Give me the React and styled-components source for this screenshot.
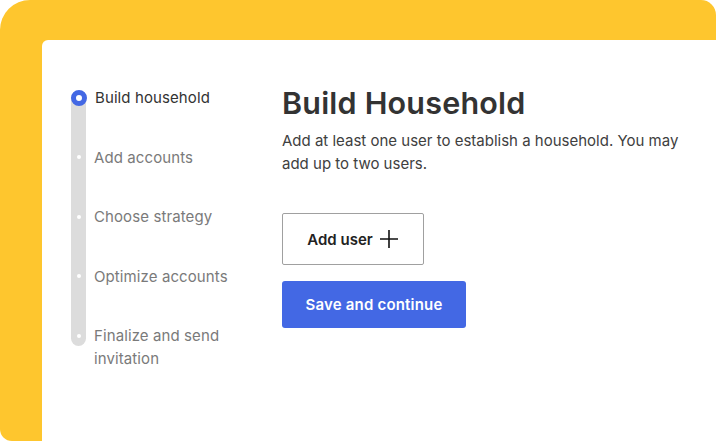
import styled, { createGlobalStyle } from "styled-components";

const GlobalStyle = createGlobalStyle`
  html, body {
    margin: 0;
    padding: 0;
    background: #ffffff;
  }
  body {
    font-family: Inter, "Liberation Sans", sans-serif;
    -webkit-font-smoothing: antialiased;
  }
`;

const Frame = styled.div`
  width: 716px;
  height: 441px;
  box-sizing: border-box;
  padding: 40px 0 0 42px;
  background: #fec62e;
  border-radius: 30px 15px 0 12px;
  overflow: hidden;
  display: flex;
`;

const Card = styled.section`
  flex: 1;
  display: flex;
  background: #ffffff;
  border-radius: 6px 0 0 0;
  padding: 46px 0 0 29px;
`;

const Sidebar = styled.nav`
  flex: 0 0 211px;
`;

const Steps = styled.ol`
  position: relative;
  list-style: none;
  margin: 0;
  padding: 0;
  display: flex;
  flex-direction: column;
  gap: 36.5px;
`;

// grey track running behind the step dots
const Rail = styled.span`
  position: absolute;
  left: 0;
  top: 11px;
  bottom: 24px;
  width: 15px;
  background: #dcdcdc;
  border-radius: 0 0 8px 8px;
`;

const Step = styled.li`
  position: relative;
  display: flex;
  align-items: flex-start;
  gap: 8px;
`;

const Marker = styled.span`
  flex: 0 0 15px;
  height: 23px;
  display: flex;
  align-items: center;
  justify-content: center;
`;

const Dot = styled.span`
  box-sizing: border-box;
  border-radius: 50%;
  width: ${(p) => (p.$active ? "16px" : "4px")};
  height: ${(p) => (p.$active ? "16px" : "4px")};
  background: #ffffff;
  border: ${(p) => (p.$active ? "5.5px solid #4368e4" : "none")};
`;

const StepLabel = styled.span`
  font-size: 15px;
  line-height: 23px;
  letter-spacing: 0.1px;
  color: ${(p) => (p.$active ? "#333333" : "#7a7a7a")};
  max-width: 140px;
`;

const Main = styled.div`
  display: flex;
  flex-direction: column;
  align-items: flex-start;
  width: 410px;
`;

const Title = styled.h1`
  margin: -1px 0 0;
  font-size: 30.5px;
  line-height: 36px;
  font-weight: 600;
  letter-spacing: 0.2px;
  color: #333333;
`;

const Lead = styled.p`
  margin: 8px 0 0;
  font-size: 15px;
  line-height: 23px;
  color: #404040;
`;

const OutlineButton = styled.button`
  margin-top: 38px;
  width: 142px;
  height: 52px;
  display: flex;
  align-items: center;
  justify-content: center;
  gap: 6px;
  background: #ffffff;
  border: 1px solid #a0a0a0;
  border-radius: 2px;
  font-family: inherit;
  font-size: 15px;
  font-weight: 600;
  color: #222222;
  padding: 0;
`;

const PrimaryButton = styled.button`
  margin-top: 16px;
  width: 184px;
  height: 47px;
  background: #4368e4;
  border: none;
  border-radius: 3px;
  font-family: inherit;
  font-size: 15px;
  font-weight: 600;
  letter-spacing: 0.2px;
  color: #ffffff;
  padding: 0;
`;

const PlusIcon = () => (
  <svg width="20" height="20" viewBox="0 0 20 20" aria-hidden="true">
    <path d="M10 1v18M1 10h18" stroke="#111" strokeWidth="1.6" fill="none" />
  </svg>
);

const steps = [
  "Build household",
  "Add accounts",
  "Choose strategy",
  "Optimize accounts",
  "Finalize and send invitation",
];

export default function App() {
  return (
    <>
      <GlobalStyle />
      <Frame>
        <Card>
          <Sidebar>
            <Steps>
              <Rail />
              {steps.map((label, i) => (
                <Step key={label}>
                  <Marker>
                    <Dot $active={i === 0} />
                  </Marker>
                  <StepLabel $active={i === 0}>{label}</StepLabel>
                </Step>
              ))}
            </Steps>
          </Sidebar>
          <Main>
            <Title>Build Household</Title>
            <Lead>
              Add at least one user to establish a household. You may add up to
              two users.
            </Lead>
            <OutlineButton>
              Add user <PlusIcon />
            </OutlineButton>
            <PrimaryButton>Save and continue</PrimaryButton>
          </Main>
        </Card>
      </Frame>
    </>
  );
}
